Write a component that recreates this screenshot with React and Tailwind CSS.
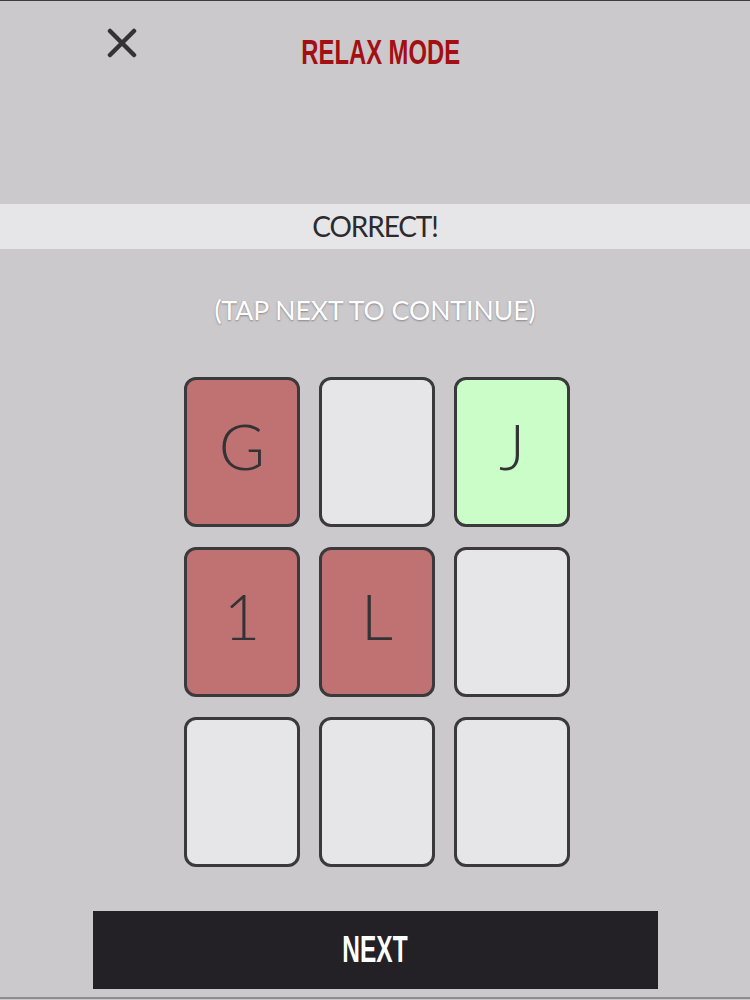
import React from "react";

const cards = [
  { label: "G", tone: "miss" },
  { label: "", tone: "idle" },
  { label: "J", tone: "hit" },
  { label: "1", tone: "miss" },
  { label: "L", tone: "miss" },
  { label: "", tone: "idle" },
  { label: "", tone: "idle" },
  { label: "", tone: "idle" },
  { label: "", tone: "idle" },
];

const toneClass = {
  miss: "bg-[#c07272]",
  hit: "bg-[#cbfdc8]",
  idle: "bg-[#e6e5e7]",
};

const CloseIcon = () => (
  <svg width="30" height="30" viewBox="0 0 30 30" className="block">
    <path
      d="M3 3 L27 27 M27 3 L3 27"
      stroke="#333235"
      strokeWidth="4.5"
      strokeLinecap="round"
      fill="none"
    />
  </svg>
);

const Card = ({ label, tone }) => (
  <div
    className={`h-[150px] w-[116px] rounded-[12px] border-[3px] border-[#3a393c] flex items-center justify-center ${toneClass[tone]}`}
  >
    <span className="pb-[14px] text-[63px] leading-none font-light text-[#333235] font-['Lato','Liberation_Sans',sans-serif]">
      {label}
    </span>
  </div>
);

export default function App() {
  return (
    <div className="h-[1000px] w-[750px] bg-[#cbc9cc] border-t border-[#3d3c40] flex flex-col overflow-hidden">
      {/* header */}
      <div className="h-[203px] grid grid-cols-3">
        <div className="pl-[107px] pt-[27px]">
          <CloseIcon />
        </div>
        <div className="pl-[12px] pt-[34px] flex justify-center">
          <span className="inline-block scale-x-[0.68] whitespace-nowrap text-[35px] leading-[34px] font-bold text-[#a30f12] font-['Liberation_Sans',Arial,sans-serif]">
            RELAX MODE
          </span>
        </div>
        <div />
      </div>

      {/* result bar */}
      <div className="h-[45px] bg-[#e6e5e7] flex justify-center">
        <span className="inline-block text-[28px] leading-[45px] tracking-[-0.04em] text-[#2b2a2d] font-['Lato','Liberation_Sans',sans-serif]">
          CORRECT!
        </span>
      </div>

      <p className="mt-[48px] text-center text-[26.5px] leading-[26px] text-white [text-shadow:0_1px_2px_rgba(0,0,0,0.35)] font-['Lato','Liberation_Sans',sans-serif]">
        (TAP NEXT TO CONTINUE)
      </p>

      {/* card grid */}
      <div className="mt-[54px] pl-[4px] flex justify-center">
        <div className="grid grid-cols-[116px_116px_116px] gap-x-[19px] gap-y-[20px]">
          {cards.map((c, i) => (
            <Card key={i} label={c.label} tone={c.tone} />
          ))}
        </div>
      </div>

      <button className="mt-[44px] mx-auto h-[78px] w-[565px] bg-[#232125] flex items-center justify-center">
        <span className="inline-block scale-x-[0.68] text-[36px] leading-none font-bold text-white font-['Liberation_Sans',Arial,sans-serif]">
          NEXT
        </span>
      </button>

      <div className="mt-[8px] h-[2px] bg-[#8d8c90]" />
    </div>
  );
}
